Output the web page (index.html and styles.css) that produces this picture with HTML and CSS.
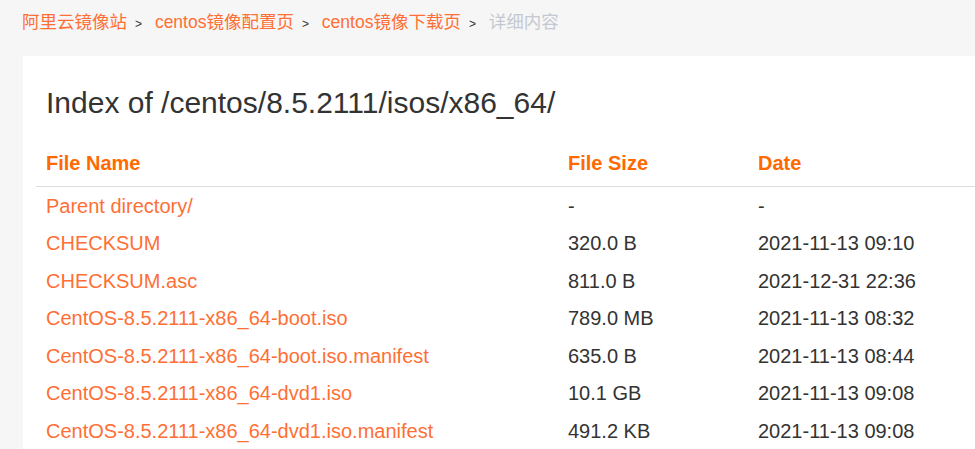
FILE: index.html
```html
<!DOCTYPE html>
<html>
<head>
    <meta charset="utf-8">
    <link rel="stylesheet" href="styles.css">
</head>
<body>
    <div class="crumbs">
        <a href="#">阿里云镜像站</a><span class="sep">&gt;</span>
        <a href="#">centos镜像配置页</a><span class="sep">&gt;</span>
        <a href="#">centos镜像下载页</a><span class="sep">&gt;</span>
        <span class="current">详细内容</span>
    </div>

    <div class="panel">
        <h1 class="title">Index of /centos/8.5.2111/isos/x86_64/</h1>
        <table class="files">
            <thead>
                <tr>
                    <th class="col-name">File Name</th>
                    <th class="col-size">File Size</th>
                    <th>Date</th>
                </tr>
            </thead>
            <tbody>
                <tr><td><a href="#">Parent directory/</a></td><td>-</td><td>-</td></tr>
                <tr><td><a href="#">CHECKSUM</a></td><td>320.0 B</td><td>2021-11-13 09:10</td></tr>
                <tr><td><a href="#">CHECKSUM.asc</a></td><td>811.0 B</td><td>2021-12-31 22:36</td></tr>
                <tr><td><a href="#">CentOS-8.5.2111-x86_64-boot.iso</a></td><td>789.0 MB</td><td>2021-11-13 08:32</td></tr>
                <tr><td><a href="#">CentOS-8.5.2111-x86_64-boot.iso.manifest</a></td><td>635.0 B</td><td>2021-11-13 08:44</td></tr>
                <tr><td><a href="#">CentOS-8.5.2111-x86_64-dvd1.iso</a></td><td>10.1 GB</td><td>2021-11-13 09:08</td></tr>
                <tr><td><a href="#">CentOS-8.5.2111-x86_64-dvd1.iso.manifest</a></td><td>491.2 KB</td><td>2021-11-13 09:08</td></tr>
            </tbody>
        </table>
    </div>
</body>
</html>
```

FILE: styles.css
```css
html, body {
  overflow: hidden;
}

body {
  margin: 0;
  background-color: #f6f6f6;
  font-family: "Liberation Sans", Arial, "Noto Sans CJK SC", sans-serif;
  color: #333;
}

a {
  color: #ff6f35;
  text-decoration: none;
}

/* breadcrumb */
.crumbs {
  height: 56px;
  box-sizing: border-box;
  padding: 11px 0 0 22px;
  font-size: 17.5px;
  line-height: 22px;
}

.crumbs .sep {
  font-size: 12px;
  color: #333;
  margin: 0 8px;
}

.crumbs .current {
  color: #c4c9d1;
}

/* listing panel */
.panel {
  margin-left: 23px;
  width: 1100px;
  background-color: #fff;
  padding: 29px 0 0 13px;
  height: 400px;
}

.title {
  margin: 0 0 0 10px;
  font-size: 30px;
  font-weight: normal;
  line-height: 36px;
  color: #333;
}

.files {
  width: 100%;
  border-collapse: collapse;
  margin-top: 30px;
  font-size: 20px;
}

.files th {
  text-align: left;
  color: #ff6a00;
  font-weight: bold;
  padding: 0 10px 11px 10px;
  line-height: 24px;
  border-bottom: 1px solid #ddd;
}

.files td {
  padding: 0 10px;
  height: 37.5px;
  line-height: 24px;
  white-space: nowrap;
}

.col-name {
  width: 502px;
}

.col-size {
  width: 170px;
}
```
